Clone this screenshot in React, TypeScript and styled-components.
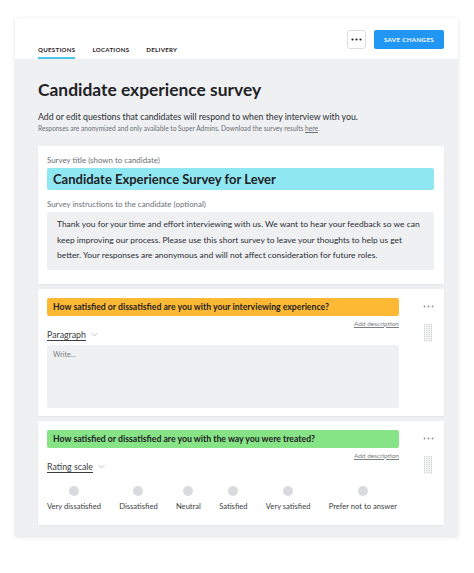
import React from 'react';
import styled, { createGlobalStyle } from 'styled-components';

const Global = createGlobalStyle`
  body {
    margin: 0;
    background: #ffffff;
    font-family: Lato, "Noto Sans", sans-serif;
    color: #1f2226;
  }
`;

const Page = styled.div`
  width: 474px;
  height: 573px;
  padding: 18px 16px 0 15px;
  box-sizing: border-box;
`;

const Panel = styled.div`
  width: 443px;
  background: #eff0f2;
  box-shadow: 0 1px 4px rgba(0, 0, 0, 0.12);
`;

const Header = styled.div`
  height: 41px;
  background: #fff;
  display: flex;
  align-items: flex-end;
  padding: 0 14px 0 23px;
  position: relative;
`;

const Tabs = styled.div`
  display: flex;
  gap: 17px;
`;

const Tab = styled.div<{ $active?: boolean }>`
  font-size: 6.1px;
  font-weight: 700;
  letter-spacing: 0.3px;
  color: #1f2226;
  padding-bottom: 4px;
  border-bottom: 2px solid ${p => (p.$active ? '#4dc6f0' : 'transparent')};
`;

const Actions = styled.div`
  position: absolute;
  right: 14px;
  top: 12px;
  display: flex;
  gap: 8px;
`;

const MoreButton = styled.div`
  width: 19px;
  height: 19px;
  border: 1px solid #dcdde0;
  border-radius: 3px;
  background: #fff;
  display: flex;
  align-items: center;
  justify-content: center;
  box-sizing: border-box;
`;

const SaveButton = styled.div`
  width: 70px;
  height: 19px;
  background: #2196f3;
  color: #fff;
  border-radius: 2px;
  font-size: 6.2px;
  font-weight: 700;
  letter-spacing: 0.35px;
  display: flex;
  align-items: center;
  justify-content: center;
`;

const Body = styled.div`
  padding: 18px 14px 11px 23px;
`;

const Title = styled.h1`
  margin: 0;
  font-size: 17.4px;
  font-weight: 700;
  line-height: 26px;
`;

const Lead = styled.p`
  margin: 8px 0 0;
  font-size: 8.75px;
  line-height: 12px;
  color: #2b2f33;
`;

const Note = styled.p`
  margin: 0;
  font-size: 6.6px;
  line-height: 10px;
  color: #6b7075;

  a {
    color: #6b7075;
    text-decoration: underline;
  }
`;

const Card = styled.div`
  background: #fff;
  margin-top: 5px;
  padding: 9px 10px 8px 9px;
  box-shadow: 0 1px 2px rgba(0, 0, 0, 0.06);
`;

const FirstCard = styled(Card)`
  margin-top: 13px;
  padding-bottom: 14px;
`;

const FieldLabel = styled.div`
  font-size: 7.9px;
  color: #6b7075;
  line-height: 10px;
  margin-bottom: 3px;
`;

const TitleField = styled.div`
  background: #8fe7f2;
  border-radius: 2px;
  height: 22px;
  padding: 0 6px;
  display: flex;
  align-items: center;
  font-size: 13px;
  font-weight: 700;
  margin-bottom: 9px;
`;

const TextArea = styled.div<{ $height?: number; $muted?: boolean }>`
  background: #eff0f2;
  border-radius: 2px;
  padding: ${p => (p.$muted ? '4px 6px' : '5px 6px 6px 10px')};
  min-height: ${p => p.$height ?? 0}px;
  box-sizing: border-box;
  font-size: ${p => (p.$muted ? '7.2px' : '8.45px')};
  line-height: ${p => (p.$muted ? '11px' : '15.5px')};
  color: ${p => (p.$muted ? '#7a7e83' : '#2b2f33')};
`;

const QuestionRow = styled.div`
  display: flex;
  gap: 24px;
`;

const QuestionMain = styled.div`
  width: 352px;
`;

const QuestionBar = styled.div<{ $color: string }>`
  background: ${p => p.$color};
  border-radius: 2px;
  height: 18px;
  padding: 0 6px;
  display: flex;
  align-items: center;
  font-size: 8.7px;
  font-weight: 700;
  color: #1f2226;
`;

const AddDescription = styled.div`
  text-align: right;
  font-size: 6.5px;
  color: #7a7e83;
  text-decoration: underline;
  margin-top: 4px;
  line-height: 8px;
`;

const TypeSelect = styled.div`
  display: flex;
  align-items: center;
  gap: 5px;
  font-size: 8.8px;
  color: #3a3e42;
  line-height: 11px;
  margin: 1px 0 5px;

  span {
    text-decoration: underline;
    text-underline-offset: 2px;
  }
`;

const SideTools = styled.div`
  display: flex;
  flex-direction: column;
  align-items: center;
  gap: 16px;
  padding-top: 7px;
`;

const Scale = styled.div`
  display: flex;
  justify-content: space-between;
  padding: 9px 2px 6px 0;
`;

const ScaleItem = styled.div`
  display: flex;
  flex-direction: column;
  align-items: center;
  gap: 5px;
  font-size: 7.6px;
  color: #3a3e42;
`;

const Dot = styled.div`
  width: 10px;
  height: 10px;
  border-radius: 50%;
  background: #d8dadd;
`;

const Ellipsis = ({ color, r }: { color: string; r: number }) => (
  <svg width="11" height="3" viewBox="0 0 11 3">
    {[1.5, 5.5, 9.5].map(x => (
      <circle key={x} cx={x} cy="1.5" r={r} fill={color} />
    ))}
  </svg>
);

const Chevron = () => (
  <svg width="7" height="5" viewBox="0 0 7 5">
    <path d="M0.5 1 L3.5 4 L6.5 1" fill="none" stroke="#b0b4b8" strokeWidth="0.8" />
  </svg>
);

const DragHandle = () => (
  <svg width="9" height="18" viewBox="0 0 9 18">
    {Array.from({ length: 9 }).map((_, r) =>
      Array.from({ length: 4 }).map((__, c) => (
        <rect key={`${r}-${c}`} x={c * 2.2 + 0.3} y={r * 2 + 0.3} width="1" height="1" fill="#a8acb0" />
      ))
    )}
  </svg>
);

const scale = ['Very dissatisfied', 'Dissatisfied', 'Neutral', 'Satisfied', 'Very satisfied', 'Prefer not to answer'];

export default function App() {
  return (
    <Page>
      <Global />
      <Panel>
        <Header>
          <Tabs>
            <Tab $active>QUESTIONS</Tab>
            <Tab>LOCATIONS</Tab>
            <Tab>DELIVERY</Tab>
          </Tabs>
          <Actions>
            <MoreButton>
              <Ellipsis color="#1f2226" r={1.1} />
            </MoreButton>
            <SaveButton>SAVE CHANGES</SaveButton>
          </Actions>
        </Header>
        <Body>
          <Title>Candidate experience survey</Title>
          <Lead>Add or edit questions that candidates will respond to when they interview with you.</Lead>
          <Note>
            Responses are anonymized and only available to Super Admins. Download the survey results <a>here</a>.
          </Note>

          <FirstCard>
            <FieldLabel>Survey title (shown to candidate)</FieldLabel>
            <TitleField>Candidate Experience Survey for Lever</TitleField>
            <FieldLabel>Survey instructions to the candidate (optional)</FieldLabel>
            <TextArea $height={56}>
              Thank you for your time and effort interviewing with us. We want to hear your feedback so we can keep
              improving our process. Please use this short survey to leave your thoughts to help us get
              <br />
              better. Your responses are anonymous and will not affect consideration for future roles.
            </TextArea>
          </FirstCard>

          <Card>
            <QuestionRow>
              <QuestionMain>
                <QuestionBar $color="#fdb933">
                  How satisfied or dissatisfied are you with your interviewing experience?
                </QuestionBar>
                <AddDescription>Add description</AddDescription>
                <TypeSelect>
                  <span>Paragraph</span>
                  <Chevron />
                </TypeSelect>
                <TextArea $muted $height={63}>Write...</TextArea>
              </QuestionMain>
              <SideTools>
                <Ellipsis color="#8a8e92" r={0.9} />
                <DragHandle />
              </SideTools>
            </QuestionRow>
          </Card>

          <Card>
            <QuestionRow>
              <QuestionMain>
                <QuestionBar $color="#87e486">
                  How satisfied or dissatisfied are you with the way you were treated?
                </QuestionBar>
                <AddDescription>Add description</AddDescription>
                <TypeSelect>
                  <span>Rating scale</span>
                  <Chevron />
                </TypeSelect>
                <Scale>
                  {scale.map(s => (
                    <ScaleItem key={s}>
                      <Dot />
                      {s}
                    </ScaleItem>
                  ))}
                </Scale>
              </QuestionMain>
              <SideTools>
                <Ellipsis color="#8a8e92" r={0.9} />
                <DragHandle />
              </SideTools>
            </QuestionRow>
          </Card>
        </Body>
      </Panel>
    </Page>
  );
}
